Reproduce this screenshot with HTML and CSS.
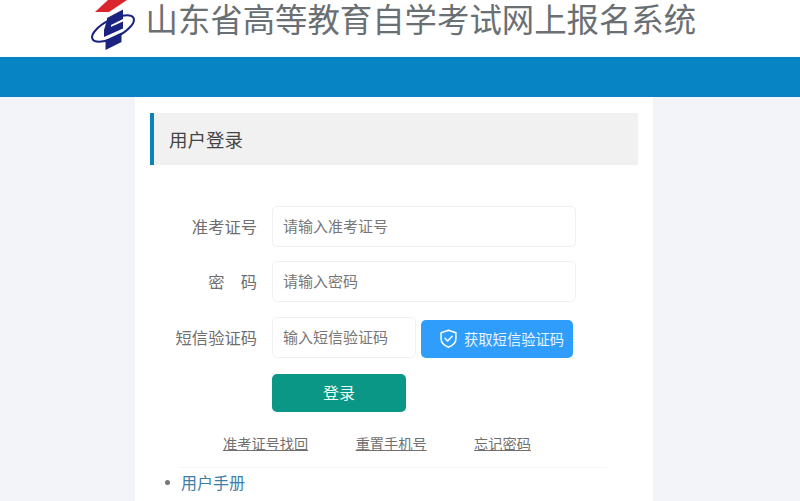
FILE: index.html
```html
<!DOCTYPE html>
<html lang="zh-CN">
<head>
<meta charset="utf-8">
<title>山东省高等教育自学考试网上报名系统</title>
<link rel="stylesheet" href="styles.css">
</head>
<body>
<header class="top">
  <svg class="logo" viewBox="0 0 46 52" width="46" height="52" aria-hidden="true">
    <path d="M5 12 L18 0 L37 0 L19 12 Z" fill="#d9252b"/>
    <ellipse cx="23" cy="28.5" rx="23" ry="9" transform="rotate(-27 23 28.5)" fill="none" stroke="#1a2380" stroke-width="2"/>
    <path d="M17 18 L33 9.5 L33 19 L17 27 Z" fill="#1a2380"/>
    <path d="M17 20 L14 30 L14 36 L21 33 L21 24 Z" fill="#1a2380"/>
    <path d="M14 30 L33 21.5 L33 28.5 L14 37 Z" fill="#1a2380"/>
    <path d="M15.5 40 L31.5 32.5 L31.5 42 L15.5 50 Z" fill="#1a2380"/>
  </svg>
  <h1 class="site-title">山东省高等教育自学考试网上报名系统</h1>
</header>
<div class="band"></div>
<main class="card">
  <h2 class="card-title">用户登录</h2>
  <form class="form">
    <div class="row">
      <label class="label">准考证号</label>
      <input class="input" type="text" placeholder="请输入准考证号">
    </div>
    <div class="row row-pass">
      <label class="label">密&emsp;码</label>
      <input class="input" type="password" placeholder="请输入密码">
    </div>
    <div class="row row-sms">
      <label class="label">短信验证码</label>
      <input class="input input-sms" type="text" placeholder="输入短信验证码">
      <button class="btn-sms" type="button">
        <svg viewBox="0 0 24 24" width="21" height="21" fill="none" stroke="#fff" stroke-width="1.7" stroke-linecap="round" stroke-linejoin="round" aria-hidden="true">
          <path d="M12 2.5 L20.5 5.5 V12 C20.5 17 16.5 20.3 12 22 C7.5 20.3 3.5 17 3.5 12 V5.5 Z"/>
          <path d="M8 11.8 L11 14.8 L16.2 9.4"/>
        </svg>
        <span>获取短信验证码</span>
      </button>
    </div>
    <button class="btn-login" type="button">登录</button>
  </form>
  <nav class="links">
    <a href="#">准考证号找回</a>
    <a href="#">重置手机号</a>
    <a href="#">忘记密码</a>
  </nav>
  <div class="rule"></div>
  <ul class="docs">
    <li class="doc"><a href="#">用户手册</a></li>
  </ul>
</main>
</body>
</html>
```
FILE: styles.css
```css
* { box-sizing: border-box; }
html, body { height: 100%; }
body {
  margin: 0;
  height: 501px;
  overflow: hidden;
  background: #f2f4f9;
  font-family: "Noto Sans CJK SC", "Noto Sans", sans-serif;
  color: #666;
}
.top {
  height: 57px;
  background: #fff;
  display: flex;
  align-items: flex-start;
  padding-left: 90px;
}
.logo { flex: none; }
.site-title {
  margin: 0 0 0 9.5px;
  font-size: 32.4px;
  line-height: 36px;
  font-weight: 400;
  color: #6a6f73;
  white-space: nowrap;
}
.band { height: 40px; background: #0784c3; }
.card {
  width: 518px;
  height: 404px;
  margin-left: 135px;
  background: #fff;
  padding: 16px 15px 0;
  overflow: hidden;
}
.card-title {
  margin: 0;
  height: 52px;
  line-height: 52px;
  padding-left: 15px;
  background: #f1f1f1;
  border-left: 4px solid #0a84b5;
  font-size: 18.5px;
  font-weight: 400;
  color: #444;
}
.form {
  padding-top: 41px;
  display: flex;
  flex-direction: column;
}
.row {
  display: flex;
  align-items: center;
  height: 41px;
  margin-bottom: 14px;
}
.row-pass { margin-bottom: 15px; }
.row-sms { margin-bottom: 16px; }
.label {
  width: 107px;
  margin-right: 15px;
  padding-bottom: 2px;
  text-align: right;
  font-size: 16.3px;
  color: #6e6e6e;
  white-space: nowrap;
  flex: none;
}
.input {
  width: 304px;
  height: 41px;
  padding: 0 10px 2px;
  border: 1px solid #f0f0f0;
  border-radius: 5px;
  background: #fff;
  font-family: inherit;
  font-size: 15px;
  color: #555;
  outline: none;
}
.input::placeholder { color: #777; opacity: 1; }
.input-sms { width: 144px; }
.btn-sms {
  display: flex;
  align-items: center;
  align-self: flex-end;
  gap: 5px;
  width: 152px;
  height: 38px;
  margin-left: 5px;
  padding: 0 0 2px 17px;
  border: 0;
  border-radius: 5px;
  background: #2f9dfb;
  color: #eaf5ff;
  font-family: inherit;
  font-size: 14.3px;
  white-space: nowrap;
}
.btn-login {
  width: 134px;
  height: 38px;
  margin-left: 122px;
  padding-bottom: 4px;
  border: 0;
  border-radius: 5px;
  background: #0a9785;
  color: #eafaf6;
  font-family: inherit;
  font-size: 16px;
}
.links {
  display: flex;
  gap: 47.5px;
  margin: 21px 0 0 73px;
  height: 21px;
  font-size: 14.2px;
  line-height: 21px;
}
.links a { color: #707070; text-decoration: underline; }
.rule {
  width: 427px;
  height: 1px;
  margin: 13px 0 0 30px;
  background: #f4f4f4;
}
.docs {
  list-style: none;
  margin: 0;
  padding: 2px 0 0 15px;
  font-size: 16px;
  line-height: 24px;
}
.doc { display: flex; align-items: center; gap: 11px; }
.doc::before {
  content: "";
  width: 5px;
  height: 5px;
  border-radius: 50%;
  background: #777;
}
.doc a { color: #3d7fa8; text-decoration: none; }
```
